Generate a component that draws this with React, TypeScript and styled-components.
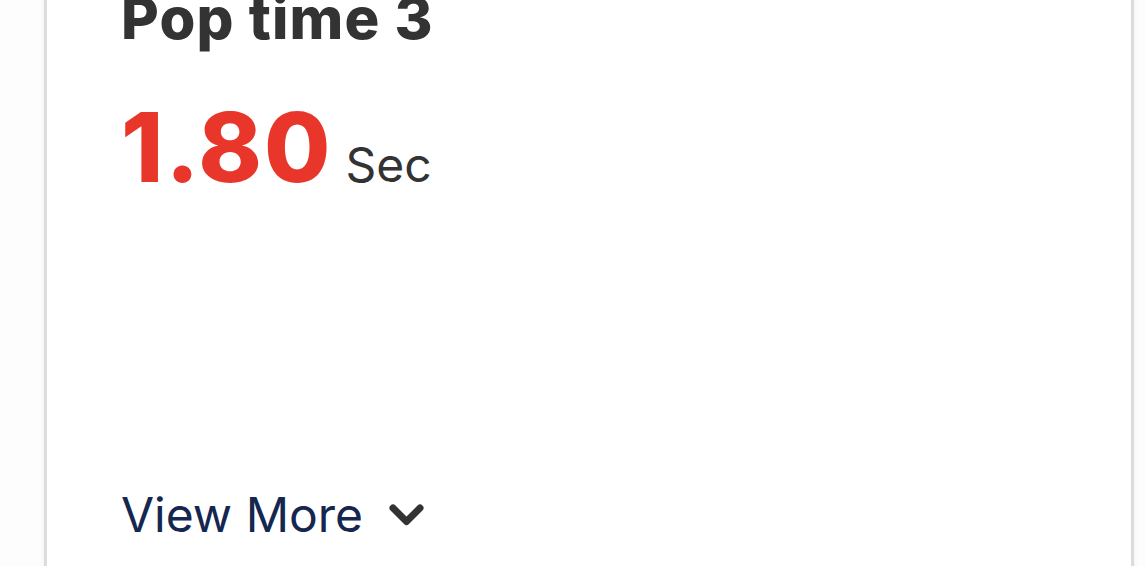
import React from 'react';
import styled, { createGlobalStyle } from 'styled-components';

const GlobalStyle = createGlobalStyle`
  html, body {
    margin: 0;
    padding: 0;
    background: #ffffff;
    font-family: Inter, "Noto Sans", "Liberation Sans", sans-serif;
  }
`;

// Styled components
const Page = styled.div`
  height: 566px;
  overflow: hidden;
  background: #fdfdfd;
`;

const Card = styled.section`
  margin: -20px 0 0 44px;
  width: 1090px;
  height: 640px;
  background: #ffffff;
  border-left: 3px solid #dcdcdc;
  border-right: 3px solid #dcdcdc;
  box-shadow: 0 0 6px rgba(0, 0, 0, 0.06);
  padding: 9px 0 0 74px;
  box-sizing: border-box;
  display: flex;
  flex-direction: column;
`;

const Title = styled.h2`
  margin: 0;
  font-size: 58px;
  line-height: 58px;
  font-weight: 800;
  color: #333333;
  letter-spacing: 1.2px;
`;

const ValueRow = styled.div`
  display: flex;
  align-items: baseline;
  gap: 13px;
  margin-top: 52px;
`;

const Value = styled.span<{ $color: string }>`
  font-size: 96px;
  line-height: 96px;
  font-weight: 800;
  color: ${(p) => p.$color};
  letter-spacing: 2px;
`;

const Unit = styled.span`
  font-size: 48px;
  font-weight: 400;
  color: #333333;
`;

const ViewMore = styled.button`
  margin-top: auto;
  margin-bottom: 81px;
  align-self: flex-start;
  display: flex;
  align-items: center;
  gap: 26px;
  border: none;
  background: none;
  padding: 0;
  cursor: pointer;
  font-family: inherit;
  font-size: 48px;
  line-height: 48px;
  font-weight: 400;
  color: #15264f;
`;

const Chevron = () => (
  <svg width="35" height="26" viewBox="0 0 35 26" fill="none">
    <path d="M4 6 L17.5 19.5 L31 6" stroke="#333333" strokeWidth="7" strokeLinecap="round" strokeLinejoin="round" />
  </svg>
);

const App = () => {
  return (
    <>
      <GlobalStyle />
      <Page>
        <Card>
          <Title>Pop time 3</Title>
          <ValueRow>
            <Value $color="#e8362a">1.80</Value>
            <Unit>Sec</Unit>
          </ValueRow>
          <ViewMore>
            View More
            <Chevron />
          </ViewMore>
        </Card>
      </Page>
    </>
  );
};

export default App;
